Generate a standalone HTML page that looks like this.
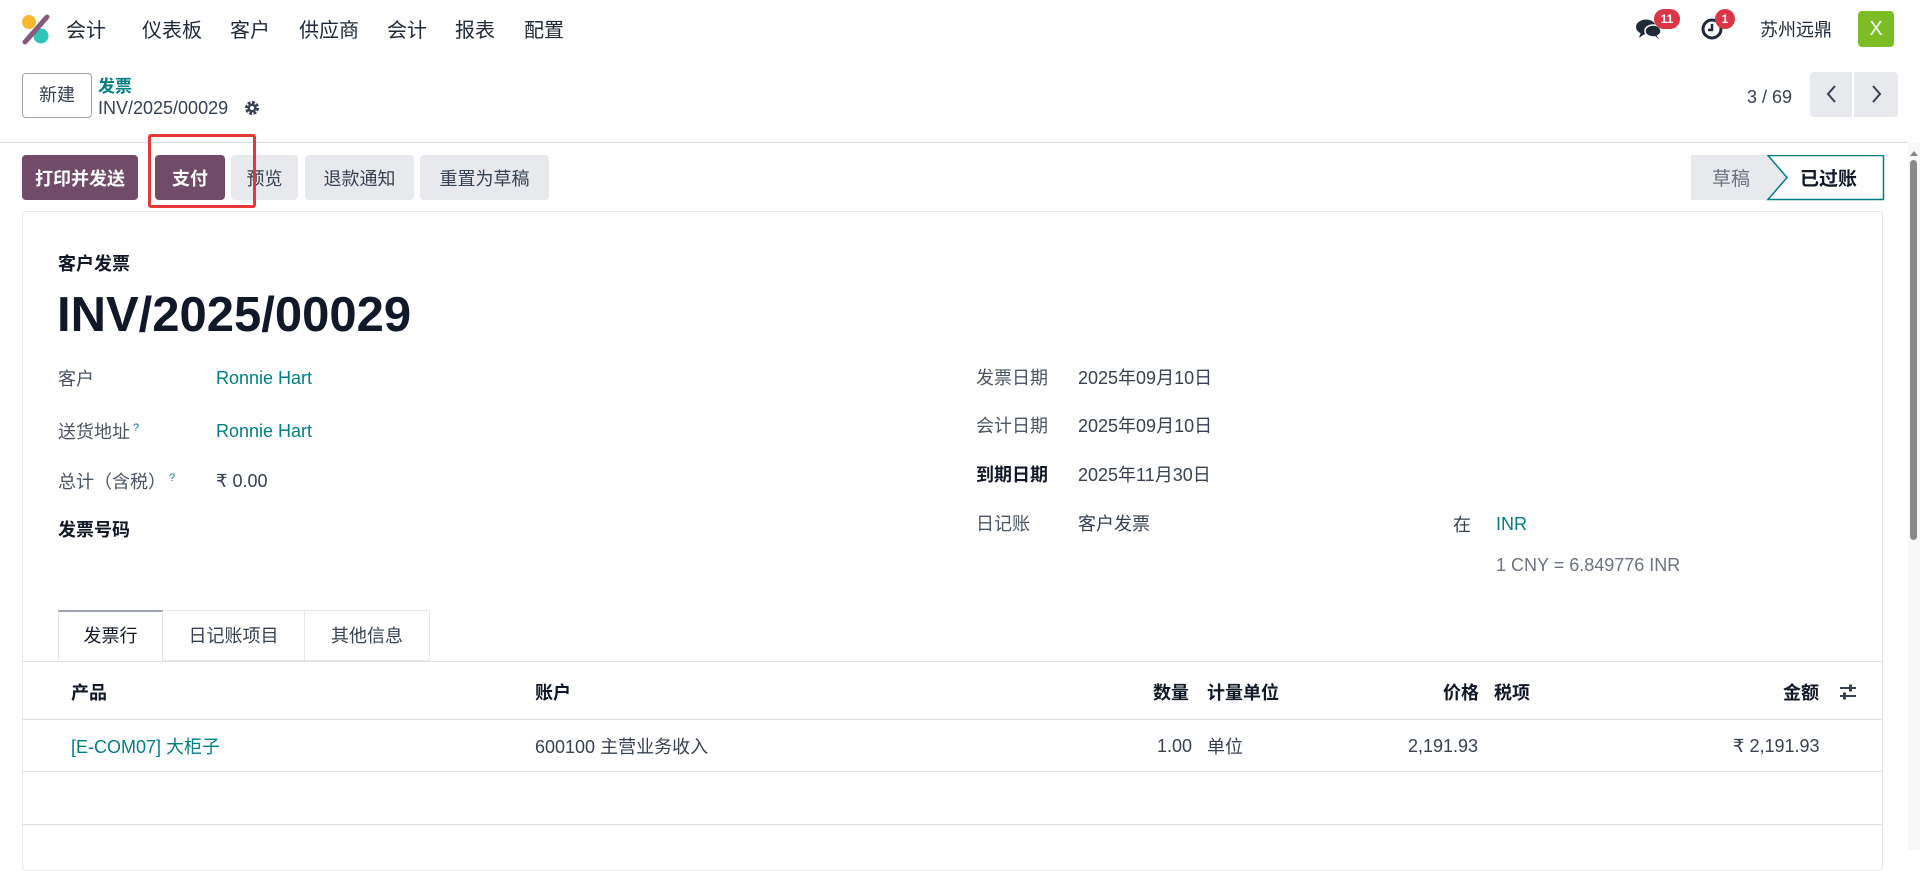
<!DOCTYPE html>
<html><head><meta charset="utf-8"><style>
*{box-sizing:border-box;margin:0;padding:0}
body{width:1920px;height:850px;overflow:hidden;background:#fff;font-family:"Liberation Sans","Noto Sans CJK SC",sans-serif;color:#374151;font-size:18px;position:relative}
.a{position:absolute;white-space:nowrap}
.nav{font-size:20px;color:#1f2937;top:14px}
.btn{position:absolute;top:155px;height:45px;border-radius:4px;font-size:18px;display:flex;align-items:center;justify-content:center;font-weight:bold}
.p{background:#714B67;color:#fff}
.g{background:#e7e9ed;color:#374151}
.lbl{color:#4b5563}
.lnk{color:#017e84}
.hl{position:absolute;left:22px;width:1861px;height:1px;background:#dee2e6}
.th{font-weight:bold;color:#111827;top:679px}
.td{top:733px}
.tn{top:736px}
</style></head><body>
<!-- navbar -->
<svg class="a" style="left:20px;top:13px" width="32" height="32" viewBox="0 0 32 32">
<circle cx="9" cy="9" r="7" fill="#f7b731"/><circle cx="21" cy="23" r="7.5" fill="#2ec4b6"/>
<line x1="27" y1="4" x2="5" y2="29" stroke="#875a7b" stroke-width="5" stroke-linecap="round"/></svg>
<div class="a nav" style="left:66px">会计</div>
<div class="a nav" style="left:142px">仪表板</div>
<div class="a nav" style="left:230px">客户</div>
<div class="a nav" style="left:299px">供应商</div>
<div class="a nav" style="left:387px">会计</div>
<div class="a nav" style="left:455px">报表</div>
<div class="a nav" style="left:524px">配置</div>
<svg class="a" style="left:1635px;top:17px" width="28" height="24" viewBox="0 0 28 24"><ellipse cx="11" cy="10" rx="10" ry="7.5" fill="#1f2937"/><path d="M6 15 L4 21 L11 16Z" fill="#1f2937"/><ellipse cx="18" cy="14" rx="8" ry="6" fill="#1f2937" stroke="#fff" stroke-width="1.5"/><path d="M21 18 L25 23 L20 19Z" fill="#1f2937"/></svg>
<div class="a" style="left:1654px;top:9px;width:26px;height:20px;border-radius:10px;background:#dc3545;color:#fff;font-size:12px;font-weight:bold;text-align:center;line-height:20px">11</div>
<svg class="a" style="left:1700px;top:17px" width="24" height="24" viewBox="0 0 24 24"><circle cx="12" cy="12" r="9" fill="none" stroke="#1f2937" stroke-width="3"/><path d="M12 7v6h-4" fill="none" stroke="#1f2937" stroke-width="2.5"/></svg>
<div class="a" style="left:1715px;top:9px;width:20px;height:20px;border-radius:10px;background:#dc3545;color:#fff;font-size:12px;font-weight:bold;text-align:center;line-height:20px">1</div>
<div class="a" style="left:1760px;top:16px;font-size:18px;color:#1f2937">苏州远鼎</div>
<div class="a" style="left:1858px;top:11px;width:36px;height:36px;border-radius:4px;background:#7cbd26;color:#fff;font-size:20px;text-align:center;line-height:36px">X</div>
<!-- control panel -->
<div class="a" style="left:22px;top:73px;width:70px;height:45px;border:1px solid #9ca3af;border-radius:4px;font-size:18px;text-align:center;line-height:43px;color:#374151">新建</div>
<div class="a lnk" style="left:98px;top:72px;font-size:17px;font-weight:bold">发票</div>
<div class="a" style="left:98px;top:98px;font-size:18px;color:#374151">INV/2025/00029</div>
<svg class="a" style="left:244px;top:100px" width="16" height="16" viewBox="0 0 16 16"><circle cx="8" cy="8" r="5" fill="none" stroke="#374151" stroke-width="4" stroke-dasharray="2.5 1.4"/><circle cx="8" cy="8" r="4.5" fill="#374151"/><circle cx="8" cy="8" r="2" fill="#fff"/></svg>
<div class="a" style="left:1747px;top:87px;font-size:18px;color:#374151">3 / 69</div>
<div class="a g" style="left:1810px;top:72px;width:42px;height:45px;border-radius:4px 0 0 4px;background:#e7e9ed"></div>
<div class="a g" style="left:1854px;top:72px;width:44px;height:45px;border-radius:0 4px 4px 0;background:#e7e9ed"></div>
<svg class="a" style="left:1822px;top:82px" width="20" height="24" viewBox="0 0 20 24"><path d="M13 4 L6 12 L13 20" fill="none" stroke="#374151" stroke-width="2"/></svg>
<svg class="a" style="left:1866px;top:82px" width="20" height="24" viewBox="0 0 20 24"><path d="M7 4 L14 12 L7 20" fill="none" stroke="#374151" stroke-width="2"/></svg>
<div class="a" style="left:0;top:142px;width:1908px;height:1px;background:#d8dadd"></div>
<!-- buttons -->
<div class="btn p" style="left:22px;width:116px">打印并发送</div>
<div class="btn p" style="left:155px;width:70px">支付</div>
<div class="btn g" style="left:231px;width:67px;font-weight:normal">预览</div>
<div class="btn g" style="left:305px;width:109px;font-weight:normal">退款通知</div>
<div class="btn g" style="left:420px;width:129px;font-weight:normal">重置为草稿</div>
<div class="a" style="left:148px;top:134px;width:108px;height:74px;border:3px solid #e53935;border-radius:3px"></div>
<!-- status -->
<svg class="a" style="left:1691px;top:155px" width="194" height="46" viewBox="0 0 194 46">
<rect x="0" y="0" width="100" height="45" fill="#e7e9ed"/>
<path d="M77 0.5 H192.5 V44.5 H77 L96 22.5Z" fill="#fff" stroke="#017e84" stroke-width="1.5"/></svg>
<div class="a" style="left:1712px;top:164px;font-size:19px;color:#6b7280">草稿</div>
<div class="a" style="left:1800px;top:164px;font-size:19px;color:#111827;font-weight:bold">已过账</div>
<!-- scrollbar -->
<div class="a" style="left:1908px;top:143px;width:12px;height:707px;background:#f8f8f8"></div>
<div class="a" style="left:1910px;top:151px;width:0;height:0;border-left:4px solid transparent;border-right:4px solid transparent;border-bottom:5px solid #888"></div>
<div class="a" style="left:1910px;top:160px;width:7px;height:380px;border-radius:4px;background:#8a8a8a"></div>
<!-- sheet -->
<div class="a" style="left:22px;top:211px;width:1861px;height:660px;border:1px solid #e5e7eb;border-radius:4px"></div>
<div class="a" style="left:58px;top:250px;font-size:18px;font-weight:bold;color:#111827">客户发票</div>
<div class="a" style="left:57px;top:287px;font-size:49px;font-weight:bold;color:#111827">INV/2025/00029</div>
<div class="a lbl" style="left:58px;top:365px">客户</div>
<div class="a lnk" style="left:216px;top:368px">Ronnie Hart</div>
<div class="a lbl" style="left:58px;top:418px">送货地址<sup style="font-size:11px;color:#017e84"> ?</sup></div>
<div class="a lnk" style="left:216px;top:421px">Ronnie Hart</div>
<div class="a lbl" style="left:58px;top:468px">总计（含税）<sup style="font-size:11px;color:#017e84"> ?</sup></div>
<div class="a" style="left:216px;top:471px">₹ 0.00</div>
<div class="a" style="left:58px;top:516px;font-weight:bold;color:#111827">发票号码</div>
<div class="a lbl" style="left:976px;top:364px">发票日期</div>
<div class="a" style="left:1078px;top:364px">2025年09月10日</div>
<div class="a lbl" style="left:976px;top:412px">会计日期</div>
<div class="a" style="left:1078px;top:412px">2025年09月10日</div>
<div class="a" style="left:976px;top:461px;font-weight:bold;color:#111827">到期日期</div>
<div class="a" style="left:1078px;top:461px">2025年11月30日</div>
<div class="a lbl" style="left:976px;top:510px">日记账</div>
<div class="a" style="left:1078px;top:510px">客户发票</div>
<div class="a" style="left:1453px;top:511px">在</div>
<div class="a lnk" style="left:1496px;top:514px">INR</div>
<div class="a" style="left:1496px;top:555px;color:#6b7280">1 CNY = 6.849776 INR</div>
<!-- tabs -->
<div class="a" style="left:58px;top:610px;width:105px;height:52px;border:1px solid #dee2e6;border-bottom:1px solid #fff;border-top:2px solid #9ca3af;background:#fff;text-align:center;line-height:48px;color:#111827">发票行</div>
<div class="a" style="left:163px;top:610px;width:142px;height:51px;border:1px solid #e5e7eb;border-left:none;text-align:center;line-height:50px;color:#374151">日记账项目</div>
<div class="a" style="left:305px;top:610px;width:125px;height:51px;border:1px solid #e5e7eb;border-left:none;text-align:center;line-height:50px;color:#374151">其他信息</div>
<div class="hl" style="top:661px"></div>
<div class="a th" style="left:71px">产品</div>
<div class="a th" style="left:535px">账户</div>
<div class="a th" style="left:1153px">数量</div>
<div class="a th" style="left:1207px">计量单位</div>
<div class="a th" style="left:1443px">价格</div>
<div class="a th" style="left:1494px">税项</div>
<div class="a th" style="left:1783px">金额</div>
<svg class="a" style="left:1838px;top:682px" width="20" height="20" viewBox="0 0 20 20"><path d="M2 6H18M2 14H18" stroke="#374151" stroke-width="2"/><rect x="11" y="2.5" width="3" height="7" fill="#374151"/><rect x="5" y="10.5" width="3" height="7" fill="#374151"/></svg>
<div class="hl" style="top:719px"></div>
<div class="a td lnk" style="left:71px">[E-COM07] 大柜子</div>
<div class="a td" style="left:535px">600100 主营业务收入</div>
<div class="a tn" style="left:1157px">1.00</div>
<div class="a td" style="left:1207px">单位</div>
<div class="a tn" style="left:1408px">2,191.93</div>
<div class="a tn" style="left:1733px">₹ 2,191.93</div>
<div class="hl" style="top:771px"></div>
<div class="hl" style="top:824px"></div>
</body></html>
